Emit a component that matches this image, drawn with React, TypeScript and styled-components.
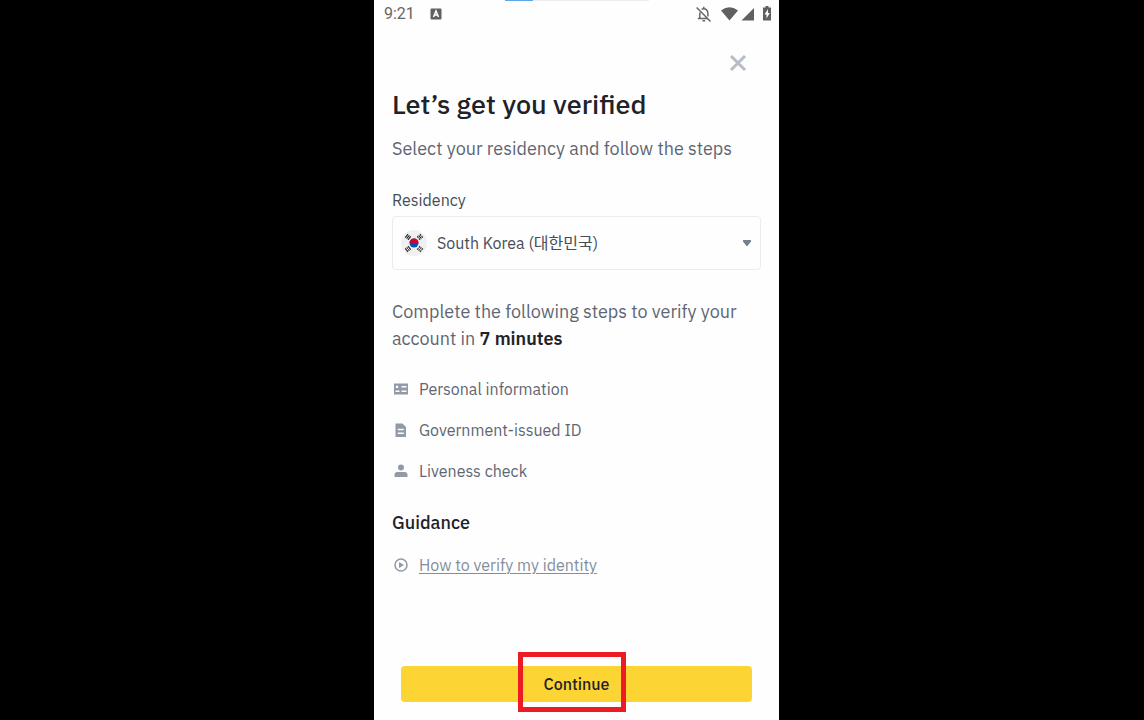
import React from 'react';
import styled, { createGlobalStyle } from 'styled-components';

const GlobalStyle = createGlobalStyle`
  * { box-sizing: border-box; }
  body {
    margin: 0;
    background: #000;
    font-family: "IBM Plex Sans", Roboto, "Noto Sans CJK KR", sans-serif;
    color: #474d57;
  }
  h1, h2, p, ul { margin: 0; padding: 0; }
`;

const Stage = styled.div`
  display: grid;
  grid-template-columns: 374fr minmax(0, 405px) 365fr;
  min-height: 100vh;
`;

const Phone = styled.main`
  grid-column: 2;
  display: flex;
  flex-direction: column;
  background: #fefefe;
`;

const Progress = styled.div`
  align-self: center;
  width: 144px;
  height: 1px;
  background: #eee;
`;

const ProgressFill = styled.div`
  width: 20%;
  height: 100%;
  background: #5fa8e8;
`;

const StatusBar = styled.header`
  display: flex;
  align-items: center;
  height: 26px;
  padding: 0 7px 0 10px;
  color: #666;
`;

const Clock = styled.span`
  flex: 1;
  display: flex;
  align-items: center;
  gap: 15px;
  font: 16px/24px Roboto, sans-serif;
`;

const StatusIcons = styled.div`
  display: flex;
  align-items: center;
`;

const Icon = styled.svg`
  display: block;
  flex: none;
  color: #929aa5;
`;

const Content = styled.div`
  flex: 1;
  display: flex;
  flex-direction: column;
  padding: 20px 18px 18px;
`;

const CloseButton = styled.button`
  align-self: flex-end;
  display: grid;
  place-items: center;
  width: 32px;
  height: 32px;
  margin-right: 7px;
  padding: 0;
  border: 0;
  background: none;
`;

const Title = styled.h1`
  margin-top: 7px;
  font-size: 27px;
  line-height: 36px;
  font-weight: 500;
  color: #1e2329;
`;

const Text = styled.p<{ $gap: number }>`
  margin-top: ${(p) => p.$gap}px;
  font-size: 18px;
  line-height: 27px;
  color: #5e6673;

  b { color: #1e2329; font-weight: 600; }
`;

const Label = styled.label`
  margin-top: 26px;
  font-size: 16px;
  line-height: 24px;
`;

const SelectBox = styled.div`
  position: relative;
  margin-top: 4px;
`;

const Select = styled.select`
  appearance: none;
  display: block;
  width: 100%;
  height: 54px;
  padding: 0 32px 0 44px;
  border: 1px solid #eaecef;
  border-radius: 4px;
  background: #fefefe;
  color: #474d57;
  font: inherit;
  font-size: 16px;
`;

const Overlay = styled.span<{ $side: 'left' | 'right' }>`
  position: absolute;
  top: 0;
  bottom: 0;
  ${(p) => p.$side}: 9px;
  display: flex;
  align-items: center;
  pointer-events: none;
`;

const Steps = styled.ul`
  display: flex;
  flex-direction: column;
  gap: 17px;
  margin-top: 25px;
  list-style: none;
`;

const Row = styled.li`
  display: flex;
  align-items: center;
  gap: 9px;
  font-size: 16px;
  line-height: 24px;
  color: #5e6673;
`;

const Subtitle = styled.h2`
  margin-top: 26px;
  font-size: 18px;
  line-height: 27px;
  font-weight: 500;
  color: #1e2329;
`;

const Guide = styled(Row).attrs({ as: 'div' })`
  margin-top: 17px;
`;

const Link = styled.a`
  color: #848e9c;
  text-underline-offset: 2px;
  text-decoration-thickness: 1px;
`;

const Footer = styled.div`
  position: relative;
  margin: auto 9px 0;
`;

const Continue = styled.button`
  display: block;
  width: 100%;
  height: 36px;
  padding: 0;
  border: 0;
  border-radius: 4px;
  background: #fcd535;
  color: #1e2329;
  font: inherit;
  font-size: 16px;
  font-weight: 500;
`;

const Highlight = styled.div`
  position: absolute;
  top: -14px;
  bottom: -10px;
  left: calc(50% - 59px);
  width: 108px;
  border: 5px solid #ed1c24;
  pointer-events: none;
`;

const trigrams = [
  { at: 'translate(7 7) rotate(-50)', broken: [] as number[] },
  { at: 'translate(19 7) rotate(50)', broken: [0, 2] },
  { at: 'translate(7 19) rotate(50)', broken: [1] },
  { at: 'translate(19 19) rotate(-50)', broken: [0, 1, 2] },
];

const Flag = () => (
  <svg width="26" height="26" viewBox="0 0 26 26" aria-hidden="true">
    <circle cx="13" cy="13" r="13" fill="#f0f0f0" />
    <circle cx="13" cy="13" r="4.5" fill="#0052b4" />
    <path d="M8.5 13a4.5 4.5 0 0 1 9 0c-1.200 1-3.200 .8-4.500 0s-3.300-.8-4.500 0z" fill="#d80027" />
    {trigrams.map((t) => (
      <g key={t.at} transform={t.at} stroke="#222" strokeWidth="1.1">
        {[0, 1, 2].map((i) => (
          <path
            key={i}
            d={`M-2.200 ${(i - 1) * 1.8}H2.200`}
            strokeDasharray={t.broken.includes(i) ? '1.800 0.800' : undefined}
          />
        ))}
      </g>
    ))}
  </svg>
);

const steps = [
  {
    label: 'Personal information',
    d: 'M2 3.500h14v11H2zM5 5.500a1.400 1.400 0 1 0 .01 0zM3.500 10.500v1.500h4v-1.500zM9.500 6v1.500h5V6zm0 4.500V12h5v-1.500z',
  },
  {
    label: 'Government-issued ID',
    d: 'M3.500 2.500h7l3.500 3.500v10H3.500zM5.800 7.800v1.500h6v-1.500zm0 3.700V13h6v-1.500z',
  },
  {
    label: 'Liveness check',
    d: 'M9 2.500a3 3 0 1 1 0 6a3 3 0 0 1 0-6zM2.500 15v-2q0-3 3-3h7q3 0 3 3v2z',
  },
];

export default function App() {
  return (
    <Stage>
      <GlobalStyle />
      <Phone>
        <Progress><ProgressFill /></Progress>
        <StatusBar>
          <Clock>
            9:21
            <svg width="12" height="12" viewBox="0 0 12 12" aria-hidden="true">
              <rect x="0.500" y="0.500" width="11" height="11" rx="1" fill="#606060" />
              <path d="M3.500 9 6 3l2.500 6M4.300 7h3.400" fill="none" stroke="#fff" strokeWidth="1.500" />
            </svg>
          </Clock>
          <StatusIcons>
            <svg width="76" height="18" viewBox="0 0 76 18" aria-hidden="true">
              <g fill="none" stroke="#666" strokeWidth="1.500">
                <path d="M.7 2.500 14.500 16.500M3.800 7.500V13M1.800 13.500H12M5.600 4.200C9 2.600 12 5 11.900 8.500V11.500" />
                <path d="M7.800 3.800V1.800M6.500 15.800h2.600" />
              </g>
              <path d="M25 5.500q8.500-6.500 17 0L33.500 15.500z" fill="#606060" />
              <path d="M58 3V15.500H45.500z" fill="#606060" />
              <path d="M69.500 1h3v1.500H75v13h-8v-13h2.500z" fill="#606060" />
              <path d="m72 4-3.500 5.500h2v4l3.300-5.500h-1.900z" fill="#fff" />
            </svg>
          </StatusIcons>
        </StatusBar>
        <Content>
          <CloseButton type="button" aria-label="Close">
            <svg width="18" height="18" viewBox="0 0 18 18">
              <path d="M2 2 16 16M16 2 2 16" stroke="#b7bdc6" strokeWidth="3" />
            </svg>
          </CloseButton>
          <Title>Let’s get you verified</Title>
          <Text $gap={13}>Select your residency and follow the steps</Text>
          <Label htmlFor="residency">Residency</Label>
          <SelectBox>
            <Select id="residency">
              <option>South Korea (대한민국)</option>
            </Select>
            <Overlay $side="left"><Flag /></Overlay>
            <Overlay $side="right">
              <svg width="10" height="6" viewBox="0 0 10 6" aria-hidden="true">
                <path d="M1 0h8v1.500L5.500 6h-1L1 1.500z" fill="#76808f" />
              </svg>
            </Overlay>
          </SelectBox>
          <Text $gap={28}>
            Complete the following steps to verify your account in <b>7 minutes</b>
          </Text>
          <Steps>
            {steps.map((s) => (
              <Row key={s.label}>
                <Icon width="18" height="18" viewBox="0 0 18 18" aria-hidden="true">
                  <path d={s.d} fill="currentColor" fillRule="evenodd" />
                </Icon>
                {s.label}
              </Row>
            ))}
          </Steps>
          <Subtitle>Guidance</Subtitle>
          <Guide>
            <Icon width="18" height="18" viewBox="0 0 18 18" aria-hidden="true">
              <circle cx="9" cy="9" r="6" fill="none" stroke="currentColor" strokeWidth="1.500" />
              <path d="M7 6v6l5-3z" fill="currentColor" />
            </Icon>
            <Link href="#guide">How to verify my identity</Link>
          </Guide>
          <Footer>
            <Continue type="button">Continue</Continue>
            <Highlight />
          </Footer>
        </Content>
      </Phone>
    </Stage>
  );
}
